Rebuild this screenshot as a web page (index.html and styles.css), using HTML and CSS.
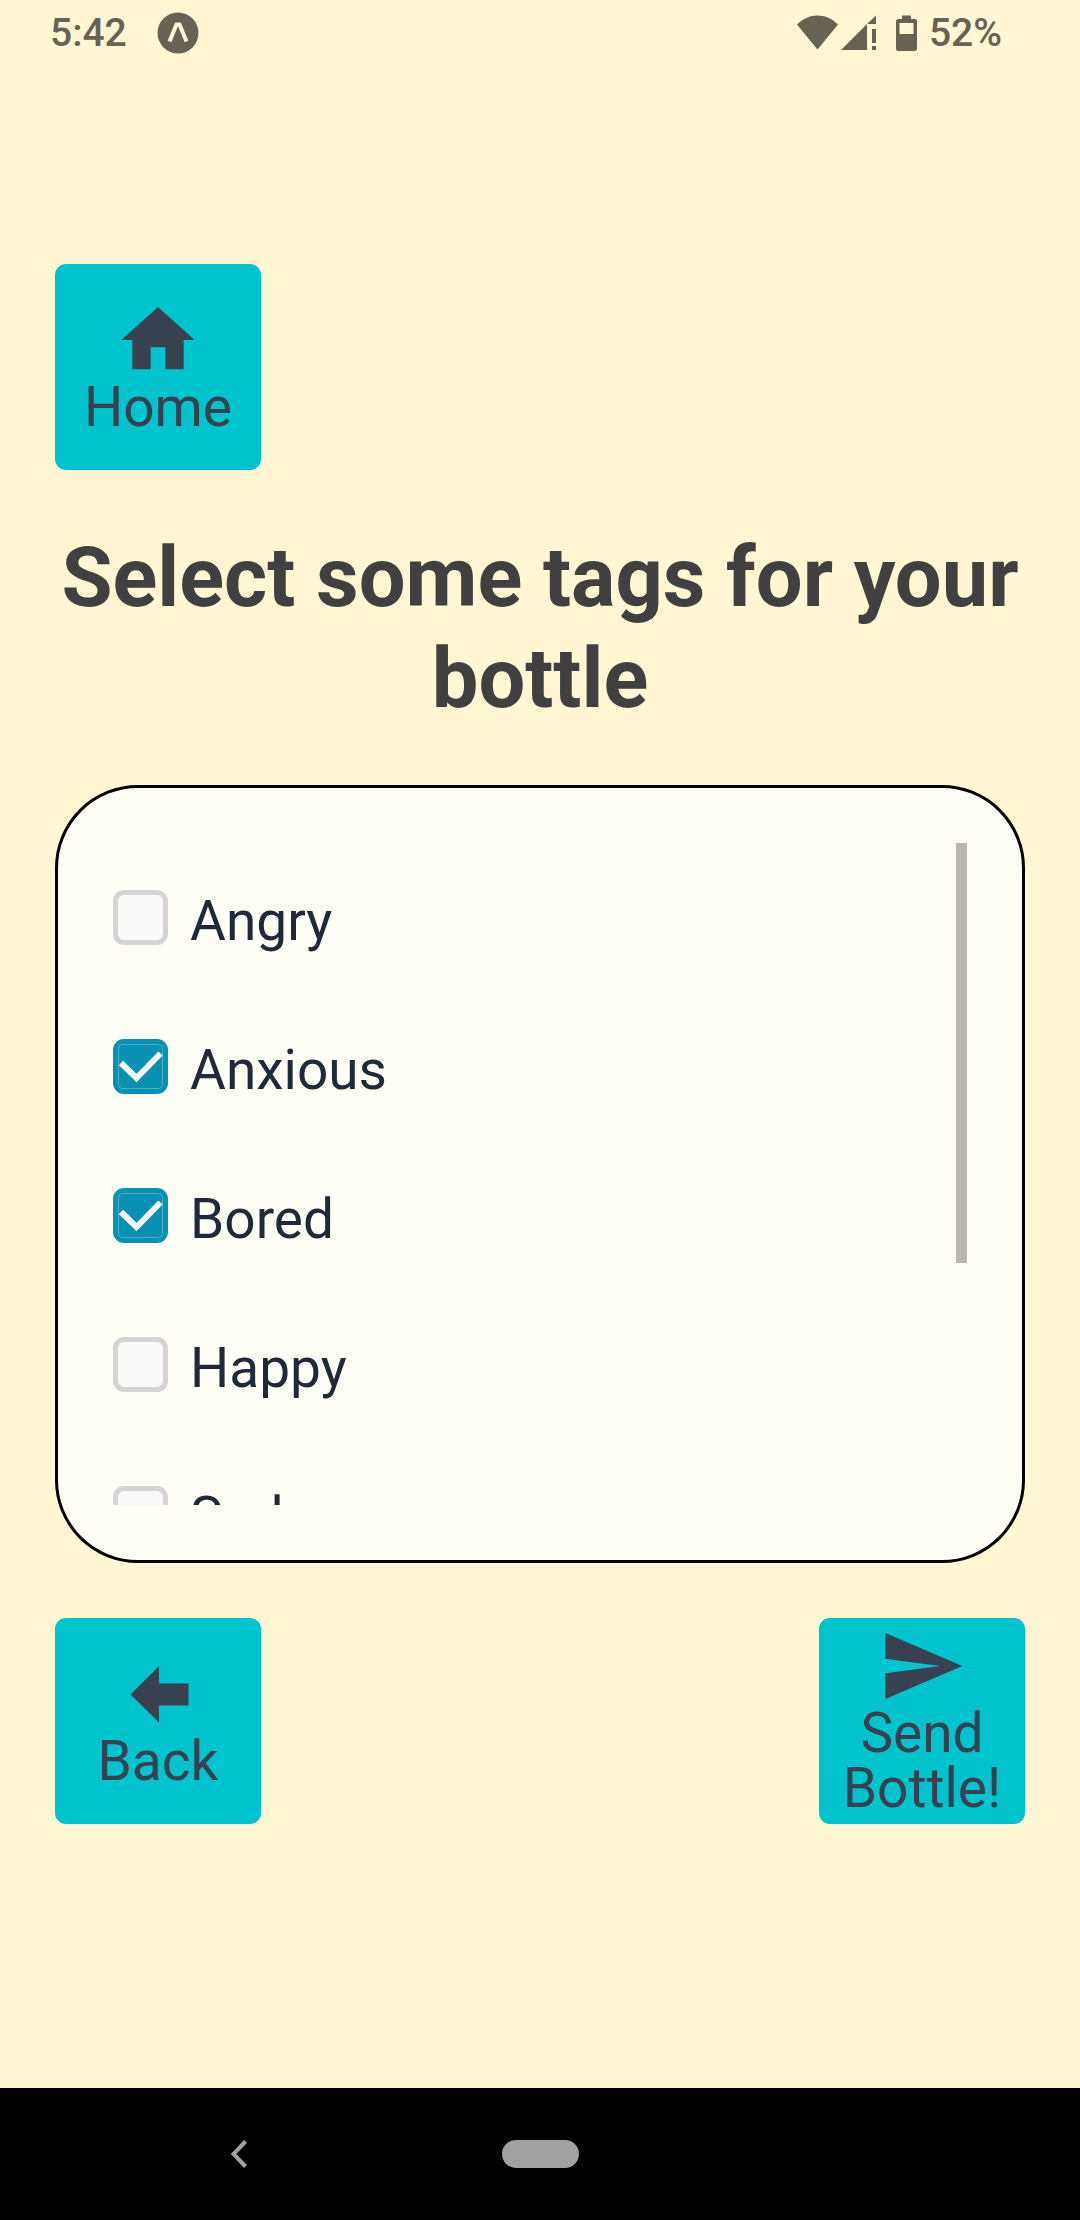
FILE: index.html
```html
<!DOCTYPE html>
<html lang="en">
<head>
  <meta charset="utf-8">
  <meta name="viewport" content="width=device-width, initial-scale=1">
  <title>Select tags</title>
  <link rel="stylesheet" href="styles.css">
</head>
<body>
  <div class="screen">
    <header class="status-bar">
      <div class="status-group status-group-left">
        <span>5:42</span>
        <svg width="42" height="42" viewBox="0 0 42 42" aria-hidden="true">
          <circle cx="21" cy="21" r="20.5" fill="currentColor"/>
          <path d="M12.500 29.500 19.500 12.500h3L29.500 29.500" fill="none" stroke="#fff6d3" stroke-width="4"/>
        </svg>
      </div>
      <div class="status-group">
        <svg width="122" height="40" viewBox="0 0 122 40" aria-hidden="true" fill="currentColor">
          <path d="M0 11.500C12-.500 29-.500 41 11.500L20.500 36.500z"/>
          <path d="M44 37 70 11V37zM70 11 79 2.500V11zM75 16h4v14h-4zM75 33h4v4h-4z"/>
          <path fill-rule="evenodd" d="M105 2.500h9V6h3.500q2.500 0 2.500 2.500V35.500q0 2.500-2.500 2.500H101.500Q99 38 99 35.500V8.500Q99 6 101.500 6H105zM102.500 10V21H116.500V10z"/>
        </svg>
        <span>52%</span>
      </div>
    </header>

    <main class="content">
      <button class="tile" type="button">
        <svg class="tile-icon" viewBox="0 0 24 24" aria-hidden="true"><path d="M10 20v-6h4v6h5v-8h3L12 3 2 12h3v8z"/></svg>
        <span class="tile-label">Home</span>
      </button>

      <h1 class="title">Select some tags for your bottle</h1>

      <section class="card">
        <div class="tags">
          <label class="tag">
            <span class="check"><input type="checkbox"><svg viewBox="0 0 55 55" aria-hidden="true"><rect x="5.500" y="5.500" width="44" height="44" rx="4"/><path d="M8 24 23.500 39 47.500 14.500"/></svg></span>
            <span class="tag-name">Angry</span>
          </label>
          <label class="tag">
            <span class="check"><input type="checkbox" checked><svg viewBox="0 0 55 55" aria-hidden="true"><rect x="5.500" y="5.500" width="44" height="44" rx="4"/><path d="M8 24 23.500 39 47.500 14.500"/></svg></span>
            <span class="tag-name">Anxious</span>
          </label>
          <label class="tag">
            <span class="check"><input type="checkbox" checked><svg viewBox="0 0 55 55" aria-hidden="true"><rect x="5.500" y="5.500" width="44" height="44" rx="4"/><path d="M8 24 23.500 39 47.500 14.500"/></svg></span>
            <span class="tag-name">Bored</span>
          </label>
          <label class="tag">
            <span class="check"><input type="checkbox"><svg viewBox="0 0 55 55" aria-hidden="true"><rect x="5.500" y="5.500" width="44" height="44" rx="4"/><path d="M8 24 23.500 39 47.500 14.500"/></svg></span>
            <span class="tag-name">Happy</span>
          </label>
          <label class="tag">
            <span class="check"><input type="checkbox"><svg viewBox="0 0 55 55" aria-hidden="true"><rect x="5.500" y="5.500" width="44" height="44" rx="4"/><path d="M8 24 23.500 39 47.500 14.500"/></svg></span>
            <span class="tag-name">Sad</span>
          </label>
        </div>
        <div class="scroll-thumb"></div>
      </section>

      <div class="actions">
        <button class="tile" type="button">
          <svg class="tile-icon" viewBox="0 0 88 88" aria-hidden="true"><path d="M45 16 16.500 44.500 45 72.500V55.500H74.500V33.500H45z"/></svg>
          <span class="tile-label">Back</span>
        </button>
        <button class="tile" type="button">
          <svg class="tile-icon" viewBox="0 0 24 24" aria-hidden="true"><path d="M2 21 23 12 2 3v7l15 2-15 2z"/></svg>
          <span class="tile-label">Send Bottle!</span>
        </button>
      </div>
    </main>

    <nav class="nav-bar" aria-label="System">
      <button class="nav-button" type="button" aria-label="Back">
        <svg width="18" height="28" viewBox="0 0 18 28" aria-hidden="true"><path d="M15.500 1.500 3.500 14 15.500 26.500" fill="none" stroke="currentColor" stroke-width="4"/></svg>
      </button>
      <button class="nav-button nav-pill" type="button" aria-label="Home screen"></button>
    </nav>
  </div>
</body>
</html>
```

FILE: styles.css
```css
* {
  box-sizing: border-box;
}

body {
  margin: 0;
  background: #fff6d3;
  font-family: Roboto, "Liberation Sans", sans-serif;
}

button {
  border: 0;
  padding: 0;
  font: inherit;
  color: inherit;
  background: none;
}

svg {
  display: block;
}

.screen {
  display: flex;
  flex-direction: column;
  min-height: 100vh;
}

/* Status bar */
.status-bar {
  display: flex;
  align-items: center;
  justify-content: space-between;
  height: 66px;
  padding: 0 78px 0 50px;
  color: #666254;
  font-size: 39px;
  font-weight: 500;
}

.status-group {
  display: flex;
  align-items: center;
  gap: 10px;
}

.status-group-left {
  gap: 30px;
}

/* Main content */
.content {
  flex: 1;
  display: flex;
  flex-direction: column;
  justify-content: center;
  padding: 0 55px 66px;
}

.tile {
  display: flex;
  flex-direction: column;
  align-items: center;
  justify-content: center;
  width: 206px;
  height: 206px;
  border-radius: 11px;
  background: #00c4cd;
  color: #374151;
  font-size: 55px;
  line-height: 55px;
}

.tile-icon {
  width: 88px;
  height: 88px;
  fill: currentColor;
}

/* Roboto sits low in a tight line box, so the label is raised */
.tile-label {
  margin: -4px 0 4px;
}

.title {
  margin: 57px 0 56px;
  color: #404040;
  font-size: 83px;
  font-weight: 700;
  line-height: 101px;
  text-align: center;
}

.card {
  position: relative;
  padding: 55px;
  border: 3px solid #000;
  border-radius: 83px;
  background: #fffff7;
}

.tags {
  max-height: 662px;
  overflow-y: auto;
  scrollbar-width: none;
}

.tag {
  display: flex;
  align-items: center;
  gap: 22px;
  height: 149px;
  color: #1f2937;
  font-size: 55px;
}

.tag-name {
  padding-top: 6px;
}

.check {
  display: grid;
}

.check input,
.check svg {
  grid-area: 1 / 1;
  width: 55px;
  height: 55px;
  margin: 0;
}

.check input {
  appearance: none;
  border: 5px solid #d4d4d4;
  border-radius: 11px;
  background: #fafafa;
}

.check input:checked {
  border-color: #0891b2;
  background: #0891b2;
}

.check svg {
  visibility: hidden;
  pointer-events: none;
  fill: none;
}

.check input:checked + svg {
  visibility: visible;
}

.check rect {
  stroke: #4dafc7;
}

.check path {
  stroke: #fafafa;
  stroke-width: 6px;
}

.scroll-thumb {
  position: absolute;
  top: 55px;
  right: 55px;
  width: 11px;
  height: 420px;
  background: #b8b8b3;
}

.actions {
  display: flex;
  justify-content: space-between;
  margin-top: 55px;
}

/* System navigation */
.nav-bar {
  display: grid;
  grid-template-columns: 1fr 77px 1fr;
  gap: 24px;
  align-items: center;
  justify-items: center;
  height: 132px;
  background: #000;
  color: #a1a1a1;
}

.nav-pill {
  width: 77px;
  height: 28px;
  border-radius: 14px;
  background: currentColor;
}
```
